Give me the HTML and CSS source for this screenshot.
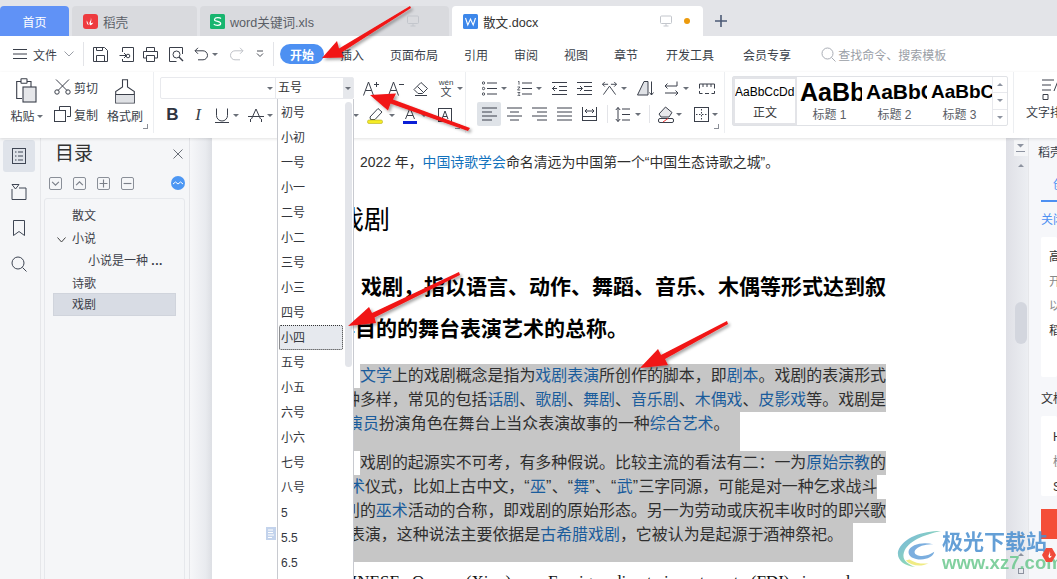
FILE: index.html
```html
<!DOCTYPE html>
<html lang="zh-CN">
<head>
<meta charset="utf-8">
<title>散文.docx</title>
<link rel="stylesheet" href="styles.css">
</head>
<body>
<div class="app">
  <header class="tabs">
    <div class="tab tab-home">首页</div>
    <div class="tab tab-daoke">
      <svg class="tab-ico" viewBox="0 0 15 15"><rect width="15" height="15" rx="3" fill="#ee3b3f"/><path d="M7.600 3.200c1 2.200-.3 3.500-1 5-.4 1-.2 2.200.6 3 1.500-.2 2.700-1.300 3-3-.9.7-1.600 1-2.300.8.3-1.900 1-3.800-.3-5.800zM3.800 6.500c-.5 2 .2 4 2 4.600-.8-1.500-1-3-2-4.600z" fill="#fff"/></svg>
      <span>稻壳</span>
    </div>
    <div class="tab tab-xls">
      <svg class="tab-ico" viewBox="0 0 15 15"><rect width="15" height="15" rx="1.500" fill="#18b56f"/><path d="M11 4.500C10 3.500 5 3 4.500 5.300 4 8 11 6.800 10.700 9.600 10.400 12 5 11.500 3.800 10.200" fill="none" stroke="#fff" stroke-width="1.200"/></svg>
      <span>word关键词.xls</span>
      <svg class="tab-mon" viewBox="0 0 12 12"><rect x=".5" y="1" width="11" height="7.500" rx="1" fill="none" stroke="#c3c6cc"/><path d="M6 8.500v2.500M3.500 11h5" stroke="#c3c6cc"/></svg>
    </div>
    <div class="tab tab-doc">
      <svg class="tab-ico" viewBox="0 0 15 15"><rect width="15" height="15" rx="1.500" fill="#3d87ea"/><path d="M2.500 4l2.300 7 2.700-6 2.700 6 2.300-7" fill="none" stroke="#fff" stroke-width="1.100"/></svg>
      <span>散文.docx</span>
      <svg class="tab-mon" viewBox="0 0 12 12"><rect x=".5" y="1" width="11" height="7.500" rx="1" fill="none" stroke="#c3c6cc"/><path d="M6 8.500v2.500M3.500 11h5" stroke="#c3c6cc"/></svg>
      <i class="dot"></i>
    </div>
    <svg class="plus" viewBox="0 0 12 12"><path d="M6 0v12M0 6h12" stroke="#4c5a75" stroke-width="1.600"/></svg>
  </header>

  <nav class="menu">
    <svg class="m-ham" viewBox="0 0 14 10"><path d="M0 .5h14M0 5h14M0 9.500h14" stroke="#3a3f4a"/></svg>
    <span class="m-file">文件</span>
    <svg class="m-chev" viewBox="0 0 10 6"><path d="M.5.500L5 5 9.500.500" fill="none" stroke="#9a9ea6"/></svg>
    <i class="m-sep m-sep1"></i>
    <svg class="qa qa1" viewBox="0 0 15 15"><path d="M.5.500h11l3 3v11H.500zM3.500 14.500v-6h8v6M3.500.500v3h6v-3" fill="none" stroke="#3a3f4a"/></svg>
    <svg class="qa qa2" viewBox="0 0 15 15"><path d="M3.500 5V.500h11v14h-11V12M.5 8.500h7M5 6l2.500 2.500L5 11" fill="none" stroke="#3a3f4a"/><circle cx="9" cy="9" r="1.800" fill="none" stroke="#3a3f4a"/></svg>
    <svg class="qa qa3" viewBox="0 0 15 15"><path d="M3.500 4.500v-4h8v4M3.500 11H.5V4.500h14V11h-3M3.500 8.500h8v6h-8z" fill="none" stroke="#3a3f4a"/></svg>
    <svg class="qa qa2" viewBox="0 0 15 15"><path d="M13.500 7V.500h-13v14h7" fill="none" stroke="#3a3f4a"/><circle cx="7.500" cy="7.500" r="3.500" fill="none" stroke="#3a3f4a"/><path d="M10 10l4 4" stroke="#3a3f4a" stroke-width="1.400"/></svg>
    <svg class="qa qa-undo" viewBox="0 0 15 15"><path d="M4 .8L1 3.800l3 3M1 3.800h8a4.500 4.500 0 010 9H4" fill="none" stroke="#3a3f4a"/></svg>
    <i class="caret caret-u"></i>
    <svg class="qa qa-redo" viewBox="0 0 15 15"><path d="M11 .8l3 3-3 3M14 3.800H6a4.500 4.500 0 000 9h5" fill="none" stroke="#bfc2c8"/></svg>
    <svg class="m-more" viewBox="0 0 8 8"><path d="M1 1h6M1 3.500l3 3 3-3" fill="none" stroke="#4a4e57"/></svg>
    <i class="m-sep m-sep2"></i>
    <span class="m-start">开始</span>
    <span class="m-item m-ins">插入</span>
    <span class="m-item">页面布局</span>
    <span class="m-item">引用</span>
    <span class="m-item">审阅</span>
    <span class="m-item">视图</span>
    <span class="m-item">章节</span>
    <span class="m-item m-kf">开发工具</span>
    <span class="m-item m-vip">会员专享</span>
    <svg class="m-search" viewBox="0 0 15 15"><circle cx="6.500" cy="6.500" r="5.500" fill="none" stroke="#a9adb5"/><path d="M10.500 10.500l4 4" stroke="#a9adb5"/></svg>
    <span class="m-ph">查找命令、搜索模板</span>
  </nav>

  <section class="toolbar">
    <div class="grp grp-clip">
      <div class="paste">
        <svg class="i-paste" viewBox="0 0 21 25"><path d="M5 3.500H.7v17H6M15 9V3.500h-4" fill="none" stroke="#3a3f4a" stroke-width="1.100"/><rect x="5" y=".7" width="6" height="4.500" rx=".5" fill="#fff" stroke="#3a3f4a" stroke-width="1.100"/><rect x="7" y="9" width="13" height="15" fill="#e6e7ea" stroke="#3a3f4a" stroke-width="1.100"/></svg>
        <span class="lbl">粘贴<i class="caret caret-l"></i></span>
      </div>
      <div class="cutcopy">
        <div class="cc"><svg viewBox="0 0 17 16"><path d="M2 .5l11 11M15 .5L4 11.500" stroke="#3a3f4a" fill="none"/><circle cx="3" cy="13" r="2.200" fill="none" stroke="#3a3f4a"/><circle cx="14" cy="13" r="2.200" fill="none" stroke="#3a3f4a"/></svg><span>剪切</span></div>
        <div class="cc"><svg viewBox="0 0 17 16"><path d="M5.500 4V.5h11v10H13" fill="none" stroke="#3a3f4a"/><rect x=".5" y="4.500" width="11" height="11" fill="#fff" stroke="#3a3f4a"/></svg><span>复制</span></div>
      </div>
      <div class="brush">
        <svg viewBox="0 0 20 25"><path d="M7.500.7h5V8l6.800 4.500V24H.7V12.500L7.500 8z" fill="#fff" stroke="#3a3f4a" stroke-width="1.100"/><rect x="1" y="15.500" width="18" height="8" fill="#dfe1e5"/><path d="M.7 15.500h18.600" stroke="#3a3f4a"/></svg>
        <span class="lbl">格式刷</span>
      </div>
      <i class="corner"></i>
    </div>

    <div class="grp grp-font">
      <div class="row row-f1">
        <div class="fontbox"><span class="f-name"><i class="caret"></i></span><span class="f-size">五号</span><span class="f-drop"><i class="caret"></i></span></div>
        <svg class="i-a i-grow" viewBox="0 0 16 15"><path d="M.5 14.500L5.500 1l5 13.500M2.500 9.500h6M11 3.500h5M13.500 1v5" fill="none" stroke="#3a3f4a"/></svg>
        <svg class="i-a i-shrink" viewBox="0 0 16 15"><path d="M.5 14.500L5.500 1l5 13.500M2.500 9.500h6M11 3.500h5" fill="none" stroke="#3a3f4a"/></svg>
        <svg class="i-a i-erase" viewBox="0 0 16 15"><path d="M1 8.500L8 1.500l6.500 6-5 5H5zM4.500 5.500l6 6M2 14.500h12" fill="none" stroke="#3a3f4a"/></svg>
        <span class="wen"><b>wén</b><em>文</em></span><i class="caret"></i>
      </div>
      <div class="row row-f2">
        <b class="t-b">B</b>
        <i class="t-i">I</i>
        <svg class="t-u" viewBox="0 0 14 15"><path d="M1.500.5v7a5.500 5.500 0 0011 0v-7M0 14.500h14" fill="none" stroke="#3a3f4a"/></svg>
        <i class="caret"></i>
        <svg class="t-s" viewBox="0 0 16 15"><path d="M2.500 14V11M13.500 14v-3M3.500 11L8 1l4.500 10M0 8.500h16" fill="none" stroke="#3a3f4a"/></svg>
        <i class="caret"></i>
        <i class="caret caret-after"></i>
        <svg class="i-hl" viewBox="0 0 17 17"><path d="M3 10L11 1.500l4 3.500-7 7.500H3.500z" fill="none" stroke="#3a3f4a"/><rect x=".5" y="13" width="15" height="3.500" rx="1.500" fill="#f5ec25" stroke="#b7ae1d" stroke-width=".6"/></svg>
        <i class="caret"></i>
        <svg class="i-col" viewBox="0 0 14 17"><path d="M2.500 12L7 1l4.500 11M4 8.500h6" fill="none" stroke="#3a3f4a"/><rect y="14" width="14" height="3" fill="#0b1fd6"/></svg>
        <i class="caret"></i>
        <svg class="i-box" viewBox="0 0 14 14"><rect x=".5" y=".5" width="13" height="13" fill="none" stroke="#3a3f4a"/><path d="M4 11L7 3l3 8M5 8.500h4" fill="none" stroke="#3a3f4a"/></svg>
      </div>
      <i class="corner"></i>
    </div>

    <div class="grp grp-para">
      <div class="row row-p1">
        <svg class="pi" viewBox="0 0 15 15"><path d="M5 2h10M5 7.500h10M5 13h10" stroke="#3a3f4a"/><g fill="none" stroke="#3a3f4a" stroke-width=".9"><circle cx="1.500" cy="2" r="1.200"/><circle cx="1.500" cy="7.500" r="1.200"/><circle cx="1.500" cy="13" r="1.200"/></g></svg><i class="caret"></i>
        <svg class="pi" viewBox="0 0 15 15"><path d="M5 2h10M5 7.500h10M5 13h10" stroke="#3a3f4a"/><path d="M1 .5l1-.3v3.500M.5 6h2.500L.5 9h2.700M.5 11.500h2.500L1.500 13 3 14.700H.5" fill="none" stroke="#3a3f4a" stroke-width=".8"/></svg><i class="caret"></i>
        <svg class="pi" viewBox="0 0 15 15"><path d="M0 1.500h15M7 5.500h8M7 9.500h8M0 13.500h15M0 7.500h5M3 5L.5 7.500 3 10" fill="none" stroke="#3a3f4a"/></svg>
        <svg class="pi" viewBox="0 0 15 15"><path d="M0 1.500h15M7 5.500h8M7 9.500h8M0 13.500h15M0 7.500h5M3 5l2.500 2.500L3 10" fill="none" stroke="#3a3f4a"/></svg>
        <svg class="pi" viewBox="0 0 16 15"><path d="M.5 3h6M3 .5L.5 3 3 5.500M15.500 3h-6M13 .5L15.500 3 13 5.500M1.500 14L8 5l6.500 9" fill="none" stroke="#3a3f4a"/></svg><i class="caret"></i>
        <svg class="pi pi-w17" viewBox="0 0 17 15"><path d="M.5 14L7 .5h4v13.500z" fill="#e0e2e6" stroke="#3a3f4a"/><path d="M14.500.5V14M12.500 11.500l2 2.500 2-2.500" fill="none" stroke="#3a3f4a"/></svg>
        <svg class="pi" viewBox="0 0 15 15"><path d="M13 .5V5H1M3.500 2.500L1 5l2.500 2.500M1 12h13M11.500 9.500L14 12l-2.500 2.500" fill="none" stroke="#3a3f4a"/></svg><i class="caret"></i>
        <svg class="pi pi-w16" viewBox="0 0 16 12"><path d="M.5 6.500V2h15v4.500M4 2v3M8 2v3M12 2v3M.5 9v2.500h3M15.500 9v2.500h-3M6 11.500h4" fill="none" stroke="#3a3f4a"/></svg>
      </div>
      <div class="row row-p2">
        <span class="cell cell-on"><svg viewBox="0 0 15 14"><path d="M0 1h15M0 5h10M0 9h15M0 13h10" stroke="#3a3f4a"/></svg></span>
        <span class="cell"><svg viewBox="0 0 15 14"><path d="M0 1h15M3 5h9M0 9h15M3 13h9" stroke="#3a3f4a"/></svg></span>
        <span class="cell"><svg viewBox="0 0 15 14"><path d="M0 1h15M5 5h10M0 9h15M5 13h10" stroke="#3a3f4a"/></svg></span>
        <span class="cell"><svg viewBox="0 0 15 14"><path d="M0 1h15M0 5h15M0 9h15M0 13h15" stroke="#3a3f4a"/></svg></span>
        <span class="cell"><svg viewBox="0 0 15 14"><path d="M.5 0v14M14.500 0v14M.5 13.500h14M.5 9.500h14M3 4h9M5 2L3 4l2 2M10 2l2 2-2 2" fill="none" stroke="#3a3f4a"/></svg></span>
        <i class="vsep vsep1"></i>
        <svg class="pi pi-ls" viewBox="0 0 15 15"><path d="M3 .5v14M.8 3L3 .5 5.200 3M.8 12L3 14.500 5.200 12M7 2h8M7 7.500h8M7 13h8" fill="none" stroke="#3a3f4a"/></svg><i class="caret"></i>
        <i class="vsep vsep2"></i>
        <svg class="pi pi-shade" viewBox="0 0 16 17"><path d="M1 8L7.500 1 14 6.500 11 11H3z" fill="#e8e9ec" stroke="#3a3f4a"/><rect x=".5" y="12.500" width="15" height="4" rx="1.500" fill="#fff" stroke="#3a3f4a"/><path d="M5 16l5-3.500" stroke="#e33"/></svg><i class="caret"></i>
        <svg class="pi pi-grid" viewBox="0 0 15 15"><rect x=".5" y=".5" width="14" height="14" fill="none" stroke="#3a3f4a"/><path d="M7.500 2v11M2 7.500h11" stroke="#3a3f4a" stroke-dasharray="1.500 1.500"/></svg><i class="caret"></i>
      </div>
      <i class="corner"></i>
    </div>

    <div class="styles">
      <div class="st st-on"><span class="s-prev s0">AaBbCcDd</span><span class="s-lbl">正文</span></div>
      <div class="st"><span class="s-prev s1">AaBbCc</span><span class="s-lbl">标题 1</span></div>
      <div class="st"><span class="s-prev s2">AaBbCc</span><span class="s-lbl">标题 2</span></div>
      <div class="st"><span class="s-prev s3">AaBbCcD</span><span class="s-lbl">标题 3</span></div>
      <div class="st-scroll"><span><i class="caret caret-up caret-g"></i></span><span><i class="caret caret-g"></i></span><span class="st-more"><i class="caret caret-g"></i></span></div>
    </div>

    <div class="grp-wrap">
      <svg class="i-wrap" viewBox="0 0 24 24"><path d="M0 1h12M0 6h9M0 11h9M1 15.500h5v5H1z" fill="none" stroke="#3a3f4a"/><path d="M12 12L16 2l4 10" fill="none" stroke="#3a3f4a"/></svg>
      <span class="lbl lbl-wrap">文字排版</span>
    </div>
  </section>

  <main class="main">
    <aside class="rail">
      <span class="rail-btn rail-on"><svg viewBox="0 0 14 16"><rect x=".5" y=".5" width="13" height="15" fill="none" stroke="#3f4654"/><path d="M3 4h1.500M6 4h5M3 8h1.500M6 8h5M3 12h1.500M6 12h5" stroke="#3f4654"/></svg></span>
      <span class="rail-btn"><svg viewBox="0 0 16 16"><path d="M1 .5h7L4.500 5z M1 5v10.500h14V4H8" fill="none" stroke="#3f4654"/></svg></span>
      <span class="rail-btn"><svg viewBox="0 0 12 16"><path d="M.5.500h11v15L6 11.500.5 15.500z" fill="none" stroke="#3f4654"/></svg></span>
      <span class="rail-btn"><svg viewBox="0 0 16 16"><circle cx="7" cy="7" r="6" fill="none" stroke="#3f4654"/><path d="M11.500 11.500l4 4" stroke="#3f4654"/></svg></span>
    </aside>
    <aside class="toc">
      <div class="toc-head"><h2>目录</h2><svg viewBox="0 0 10 10"><path d="M.5.500l9 9M9.500.500l-9 9" stroke="#6a6f78"/></svg></div>
      <div class="toc-tools">
        <span class="tt"><svg viewBox="0 0 8 8"><path d="M1 2.500l3 3 3-3" fill="none" stroke="#7a7f88"/></svg></span>
        <span class="tt"><svg viewBox="0 0 8 8"><path d="M1 5.500l3-3 3 3" fill="none" stroke="#7a7f88"/></svg></span>
        <span class="tt"><svg viewBox="0 0 8 8"><path d="M4 .5v7M.5 4h7" stroke="#7a7f88"/></svg></span>
        <span class="tt"><svg viewBox="0 0 8 8"><path d="M.5 4h7" stroke="#7a7f88"/></svg></span>
        <span class="tt-blue"><svg viewBox="0 0 14 14"><circle cx="7" cy="7" r="7" fill="#4d97f3"/><path d="M2 8l2.500-2 2.500 2 2.500-2 2.500 2" fill="none" stroke="#fff"/></svg></span>
      </div>
      <div class="toc-tree">
        <div class="node n1">散文</div>
        <div class="node n1"><svg class="chev" viewBox="0 0 9 6"><path d="M.5.500L4.500 5 8.500.500" fill="none" stroke="#444"/></svg>小说</div>
        <div class="node n2">小说是一种 <b>...</b></div>
        <div class="node n1">诗歌</div>
        <div class="node n1 node-on">戏剧</div>
      </div>
    </aside>
    <div class="gutter"></div>
    <article class="page">
      <p class="intro">2022 年，<a>中国诗歌学会</a>命名清远为中国第一个“中国生态诗歌之城”。</p>
      <h1>戏剧</h1>
      <p class="lead first">戏剧，指以语言、动作、舞蹈、音乐、木偶等形式达到叙</p>
      <p class="lead">事目的的舞台表演艺术的总称。</p>
      <div class="sel">
        <span class="ln first"><a>文学</a>上的戏剧概念是指为<a>戏剧表演</a>所创作的脚本，即<a>剧本</a>。戏剧的表演形式</span>
        <span class="ln">多种多样，常见的包括<a>话剧</a>、<a>歌剧</a>、<a>舞剧</a>、<a>音乐剧</a>、<a>木偶戏</a>、<a>皮影戏</a>等。戏剧是</span>
        <span class="ln end shift3">由<a>演员</a>扮演角色在舞台上当众表演故事的一种<a>综合艺术</a>。</span>
        <span class="ln first">戏剧的起源实不可考，有多种假说。比较主流的看法有二：一为<a>原始宗教</a>的</span>
        <span class="ln shift5">巫<a>术</a>仪式，比如上古中文，<q>“</q><a>巫</a><q>”</q>、<q>“</q><a>舞</a><q>”</q>、<q>“</q><a>武</a><q>”</q>三字同源，可能是对一种乞求战斗</span>
        <span class="ln">胜利的<a>巫术</a>活动的合称，即戏剧的原始形态。另一为劳动或庆祝丰收时的即兴歌</span>
        <span class="ln end shift4">舞表演，这种说法主要依据是<a>古希腊戏剧</a>，它被认为是起源于酒神祭祀。</span>
      </div>
      <p class="latin">CHINESE Opera (Xiqu)&nbsp;&nbsp;&nbsp;Foreign direct investment (FDI) is and</p>
      <svg class="comment" viewBox="0 0 10 13"><rect width="10" height="13" fill="#c3d3ec"/><path d="M2 3h5M2 5.500h5M2 8h6M2 10.500h4" stroke="#fff"/></svg>
    </article>
    <div class="vscroll">
      <span class="vs-top"><svg viewBox="0 0 9 8"><path d="M1 0h7L4.500 3.500z" fill="#8d93a0"/><path d="M0 7.500h9" stroke="#8d93a0"/></svg></span>
      <i class="caret caret-up caret-g"></i>
      <span class="vs-thumb"></span>
      <i class="caret caret-g vs-d"></i>
      <i class="caret caret-up caret-g"></i>
      <svg class="vs-sq" viewBox="0 0 6 6"><rect x=".5" y=".5" width="5" height="5" fill="none" stroke="#8d93a0"/></svg>
    </div>
    <aside class="side">
      <div class="s-title">稻壳</div>
      <div class="s-tab"><span>创作</span></div>
      <div class="s-link">关闭</div>
      <div class="s-card s-card1"><p class="dk">高级</p><p class="gr">开通</p><p class="gr">以上</p><p class="dk">稻壳</p></div>
      <div class="s-sub">文档</div>
      <div class="s-card s-card2"><p class="dk">H5</p><p class="gr">模板</p><p class="dk">S</p></div>
      <div class="s-red"></div>
    </aside>
  </main>

  <div class="fsize-list">
    <div class="fs-items">
      <span>初号</span><span>小初</span><span>一号</span><span>小一</span><span>二号</span><span>小二</span><span>三号</span><span>小三</span><span>四号</span><span class="fs-on">小四</span><span>五号</span><span>小五</span><span>六号</span><span>小六</span><span>七号</span><span>八号</span><span>5</span><span>5.5</span><span>6.5</span>
    </div>
    <i class="fs-thumb"></i>
  </div>

  <div class="watermark">
    <svg class="wm-logo" viewBox="0 0 48 40">
      <defs><linearGradient id="wg" x1="0" y1="0" x2="1" y2="1"><stop offset="0" stop-color="#3f92dc"/><stop offset=".55" stop-color="#5fc6a0"/><stop offset="1" stop-color="#e8e24a"/></linearGradient></defs>
      <path d="M46 1C26 1 6 8 1 22c-2 9 6 16 18 17-9-3-14-8-12-15C10 12 28 5 46 1z" fill="url(#wg)" opacity=".85"/>
      <path d="M38 15c-11-3-24 0-26 7-1 6 6 9 13 9 7 0 13-3 14-8-4 3-10 5-16 4-5-1-6-4-3-7 4-4 12-5 18-5z" fill="#3d88cf" opacity=".8"/>
      <path d="M9 32c6 6 16 7 24 3-6 1-14 0-20-4z" fill="#e8e24a" opacity=".8"/>
    </svg>
    <div class="wm-text"><b>极光下载站</b><span>www.xz7.com</span></div>
  </div>
  <svg class="s-hex" viewBox="0 0 14 14"><path d="M4 0h6l4 7-4 7H4L0 7z" fill="#f04a3a"/><path d="M7.500 3c.8 2-.6 3-1 4.500-.2 1 .3 2 1 2.500 1.200-.3 2-1.200 2.200-2.500-.7.5-1.200.7-1.700.5.2-1.500.5-3.200-.5-5z" fill="#fff"/></svg>

  <svg class="arrows" viewBox="0 0 1057 579">
    <defs><filter id="sh" x="-20%" y="-20%" width="140%" height="140%"><feDropShadow dx="2" dy="2" stdDeviation="1.500" flood-color="#000" flood-opacity=".35"/></filter></defs>
    <g fill="#f11414" filter="url(#sh)">
      <path d="M410 6L339 48.500 337 41 322 58 344 57.500 341.500 52.500 411 8z"/>
      <path d="M470 128L393 99.500 396 93.500 370 95 388 110.500 390.500 103.500 468 131z"/>
      <path d="M459 272L372 313 369 307 348 326 376 323 374.500 317.500 460 275z"/>
      <path d="M727 321L661 355 658 349 640 368 668 365 665 359 728 324z"/>
    </g>
  </svg>
</div>
</body>
</html>
```
FILE: styles.css
```css
* { box-sizing: border-box; }
html, body { margin: 0; padding: 0; background: #fff; }
body { font-family: "Liberation Sans", "Noto Sans CJK SC", sans-serif; font-size: 12px; color: #3a3f4a; }
svg { display: block; flex: none; }
i { font-style: normal; }
p, h1, h2 { margin: 0; }

.app { position: relative; width: 1057px; height: 579px; overflow: hidden; }

/* tabs */
.tabs { display: flex; align-items: flex-end; height: 36px; background: #e3e4e8; gap: 3px; }
.tab { display: flex; flex: none; align-items: center; height: 30px; border-radius: 4px 4px 0 0; background: #d9dade; font-size: 12.600px; color: #5a5e66; white-space: nowrap; }
.tab-home { width: 69px; justify-content: center; background: #6092f6; color: #fff; font-size: 12px; }
.tab-daoke { width: 125px; padding-left: 11px; }
.tab-xls { width: 249px; padding: 0 30px 0 10px; }
.tab-doc { width: 251px; padding: 0 13px 0 11px; background: #fff; color: #333; }
.tab-ico { width: 15px; height: 15px; margin-right: 5px; }
.tab-mon { width: 12px; height: 12px; margin-left: auto; }
.dot { flex: none; width: 6px; height: 6px; border-radius: 50%; background: #ec9a0c; margin-left: 12px; }
.plus { width: 12px; height: 12px; margin: 0 0 9px 9px; }

/* menu */
.menu { display: flex; align-items: center; height: 36px; background: #fff; padding-left: 13px; font-size: 12px; color: #3a3f4a; }
.menu > * { flex: none; }
.m-ham { width: 14px; height: 10px; }
.m-file { margin-left: 6px; width: 24px; }
.m-chev { width: 10px; height: 6px; margin-left: 7px; }
.m-sep { width: 1px; height: 24px; background: #e3e4e8; }
.m-sep1 { margin-left: 9px; }
.qa { width: 15px; height: 15px; }
.qa1 { margin-left: 9px; }
.qa2 { margin-left: 11px; }
.qa3 { margin-left: 9px; }
.qa-undo { margin-left: 10px; }
.caret-u { margin-left: 3px; }
.qa-redo { margin-left: 11px; }
.m-more { width: 8px; height: 8px; margin-left: 12px; }
.m-sep2 { margin-left: 9px; }
.m-start { display: flex; align-items: center; justify-content: center; width: 44px; height: 20px; margin-left: 6px; border-radius: 10px; background: #4d90f2; color: #fff; font-weight: 700; }
.m-item { margin-left: 26px; white-space: nowrap; }
.m-ins { margin-left: 16px; }
.m-kf { margin-left: 28px; }
.m-vip { margin-left: 29px; }
.m-search { width: 15px; height: 15px; margin-left: 30px; }
.m-ph { margin-left: 2px; color: #9a9ea6; white-space: nowrap; }

/* shared small pieces */
.caret { display: inline-block; flex: none; width: 0; height: 0; border-left: 3px solid transparent; border-right: 3px solid transparent; border-top: 3px solid #6b7079; }
.caret-up { border-top: 0; border-bottom: 3px solid #6b7079; }
.caret-g { border-top-color: #8d93a0; border-bottom-color: #8d93a0; }
.corner { position: absolute; right: 5px; bottom: 4px; width: 5px; height: 5px; border-right: 1px solid #8a8e96; border-bottom: 1px solid #8a8e96; }
.lbl { display: block; white-space: nowrap; font-size: 12px; line-height: 16px; }
.row { display: flex; align-items: center; }

/* toolbar */
.toolbar { position: relative; z-index: 2; display: flex; height: 66px; background: #fff; box-shadow: 0 1px 3px rgba(0, 0, 0, .12); }
.toolbar > * { flex: none; }
.grp { position: relative; height: 61px; border-right: 1px solid #eceef1; }
.grp-clip { display: flex; width: 154px; }
.paste { width: 53px; display: flex; flex-direction: column; align-items: center; padding-top: 6px; }
.i-paste { width: 21px; height: 25px; margin-bottom: 6px; }
.caret-l { margin-left: 2px; vertical-align: 3px; }
.cutcopy { width: 53px; display: flex; flex-direction: column; gap: 11px; padding: 7px 0 0 1px; }
.cc { display: flex; align-items: center; height: 16px; }
.cc svg { width: 17px; height: 16px; margin-right: 3px; }
.brush { width: 38px; display: flex; flex-direction: column; align-items: center; padding-top: 7px; }
.brush svg { width: 20px; height: 25px; margin-bottom: 5px; }

.grp-font { width: 312px; padding: 5px 0 0 6px; }
.fontbox { display: flex; flex: none; width: 194px; height: 22px; border: 1px solid #e8e9ed; border-radius: 2px; }
.f-name { width: 115px; display: flex; align-items: center; justify-content: flex-end; border-right: 1px solid #e8e9ed; }
.f-name .caret { margin-right: 2px; }
.f-size { width: 67px; padding-left: 2px; font-size: 12px; line-height: 20px; color: #333; }
.f-drop { flex: 1; display: flex; align-items: center; justify-content: center; background: #e6e8ec; }
.i-a { width: 16px; height: 15px; }
.i-grow { margin-left: 9px; }
.i-shrink { margin-left: 9px; }
.i-erase { margin-left: 9px; }
.wen { display: flex; flex-direction: column; align-items: center; width: 16px; margin-left: 9px; line-height: 1; }
.wen b { font-size: 8px; font-weight: 400; line-height: 8px; }
.wen em { font-style: normal; font-size: 11px; line-height: 11px; }
.wen + .caret { margin-left: 3px; }
.row-f2 { margin-top: 4px; height: 24px; }
.t-b { flex: none; width: 14px; margin-left: 5.500px; font-size: 17px; font-weight: 700; text-align: center; color: #2f3440; }
.t-i { flex: none; width: 12px; margin-left: 12.500px; font-family: "Liberation Serif", serif; font-size: 17px; font-style: italic; text-align: center; }
.t-u { width: 14px; height: 15px; margin-left: 11px; }
.t-u + .caret { margin-left: 4px; }
.t-s { width: 16px; height: 15px; margin-left: 9px; }
.t-s + .caret { margin-left: 3px; }
.row-f2 .caret-after { margin-left: 80px; }
.i-hl { width: 17px; height: 17px; margin-left: 8px; }
.i-hl + .caret { margin-left: 5px; }
.i-col { width: 14px; height: 17px; margin-left: 8px; }
.i-col + .caret { margin-left: 4px; }
.i-box { width: 14px; height: 14px; margin-left: 11px; }

.grp-para { width: 259px; padding: 5px 0 0 11px; }
.row-p1 { gap: 10px; height: 22px; padding-left: 5px; }
.row-p1 .caret { margin-left: -6px; }
.pi { width: 15px; height: 15px; }
.pi-w17 { width: 17px; }
.pi-w16 { width: 16px; height: 12px; }
.row-p2 { margin-top: 3px; height: 24px; }
.cell { display: flex; flex: none; align-items: center; justify-content: center; width: 24px; height: 24px; margin-right: 1px; border-radius: 2px; }
.cell svg { width: 15px; height: 14px; }
.cell-on { background: #dfe3e8; }
.vsep { flex: none; width: 1px; height: 18px; background: #e3e4e8; }
.vsep1 { margin: 0 7px 0 5px; }
.pi-ls + .caret { margin-left: 5px; }
.vsep2 { margin: 0 8px; }
.pi-shade { width: 16px; height: 17px; }
.pi-shade + .caret { margin-left: 2px; }
.pi-grid { margin-left: 12px; }
.pi-grid + .caret { margin-left: 3px; }

.styles { display: flex; width: 276px; height: 50px; margin: 4px 0 0 7px; border: 1px solid #e0e2e6; border-radius: 2px; }
.st { flex: none; width: 65px; height: 48px; display: flex; flex-direction: column; align-items: center; overflow: hidden; }
.st-on { width: 64px; border: 2px solid #e3e4e8; }
.s-prev { display: block; height: 30px; width: 100%; overflow: hidden; white-space: nowrap; line-height: 30px; color: #000; text-align: left; }
.st-on .s-prev { line-height: 26px; height: 26px; }
.s0 { font-size: 12px; padding-left: 0; }
.s1 { font-size: 25px; font-weight: 700; padding-left: 3px; }
.s2 { font-size: 21px; font-weight: 700; padding-left: 4px; }
.s3 { font-size: 19px; font-weight: 700; padding-left: 4px; }
.s-lbl { font-size: 12px; line-height: 16px; color: #5a5e66; }
.st-on .s-lbl { color: #333; }
.st-scroll { flex: 1; display: flex; flex-direction: column; border-left: 1px solid #e8e9ed; }
.st-scroll span { flex: 1; display: flex; align-items: center; justify-content: center; border-bottom: 1px solid #e8e9ed; }
.st-scroll span:last-child { border-bottom: 0; }
.grp-wrap { margin-left: 5px; padding-left: 12px; border-left: 1px solid #eceef1; height: 61px; white-space: nowrap; }
.i-wrap { width: 24px; height: 24px; margin: 7px 0 2px 16px; }

/* main */
.main { display: flex; height: 441px; }
.main > * { flex: none; }
.rail { width: 41px; padding: 2px 3px 0; background: #f5f6f8; border-right: 1px solid #e6e7ea; display: flex; flex-direction: column; gap: 4px; }
.rail-btn { display: flex; align-items: center; justify-content: center; width: 32px; height: 32px; border-radius: 3px; }
.rail-btn svg { width: 16px; height: 16px; }
.rail-on { background: #dfe3ea; }
.toc { width: 149px; padding: 0 4px 0 3px; background: #f5f6f8; border-right: 1px solid #e3e4e8; }
.toc-head { display: flex; align-items: center; justify-content: space-between; height: 30px; padding: 2px 2px 0 11px; }
.toc-head h2 { font-size: 19px; font-weight: 400; line-height: 28px; color: #333; }
.toc-head svg { width: 10px; height: 10px; }
.toc-tools { display: flex; align-items: center; height: 30px; padding-left: 5px; gap: 11px; }
.tt { display: flex; align-items: center; justify-content: center; width: 13px; height: 13px; border: 1px solid #8a8f98; border-radius: 2px; }
.tt svg { width: 9px; height: 9px; }
.tt-blue { margin-left: 26px; }
.tt-blue svg { width: 14px; height: 14px; }
.toc-tree { height: 400px; padding: 6px 8px 0 8px; background: #f5f6f8; border: 1px solid #e6e8ec; border-radius: 3px; }
.node { position: relative; height: 22.500px; line-height: 22px; color: #3d414a; font-size: 12px; }
.n1 { padding-left: 19px; }
.n2 { padding-left: 35px; }
.n2 b { letter-spacing: .5px; }
.chev { position: absolute; left: 4px; top: 9px; width: 9px; height: 6px; }
.node-on { margin-top: -2px; background: #d8dce4; border: 1px solid #d0d4dc; padding-left: 18px; }
.gutter { width: 22px; background: linear-gradient(90deg, #f6f7f9, #e9ebef 70%, #dddfe4); }

.page { position: relative; width: 794px; padding: 14px 0 0 116px; background: #fff; overflow: hidden; color: #2f2f2f; font-size: 15.950px; }
.page a { color: #1a5c9c; }
.page q { quotes: none; letter-spacing: .4px; }
.intro { padding-left: 32px; font-size: 13.900px; line-height: 20px; white-space: nowrap; }
.intro a { color: #1272bd; }
.page h1 { margin: 30px 0 0 10px; font-size: 26px; font-weight: 400; line-height: 36px; color: #000; }
.lead { font-size: 21px; font-weight: 700; line-height: 42px; color: #000; white-space: nowrap; margin-left: 6px; }
.lead.first { margin-top: 28px; padding-left: 27px; }
.sel { display: flex; flex-direction: column; align-items: flex-start; margin-top: 14px; }
.ln { display: block; height: 24px; line-height: 24px; white-space: nowrap; background: #c6c6c6; }
.ln.first { margin-left: 32px; }
.ln.end { height: 39px; padding-right: 10px; }
.shift3 { padding-left: 3px; }
.shift4 { padding-left: 5px; }
.shift5 { padding-left: 5px; }
.latin { margin-top: 8px; font-family: "Liberation Serif", serif; font-size: 17px; line-height: 24px; white-space: nowrap; color: #111; word-spacing: 8px; }
.comment { position: absolute; left: 54px; top: 389px; width: 10px; height: 13px; }

.vscroll { position: relative; width: 23px; display: flex; flex-direction: column; align-items: center; padding-top: 2px; background: linear-gradient(90deg, #dfe0e6, #eceef2); border-right: 1px solid #e6e7ea; }
.vs-top { display: flex; align-items: center; justify-content: center; width: 14px; height: 16px; margin-left: 7px; background: #f4f5f7; }
.vs-top svg { width: 9px; height: 8px; }
.vscroll > .caret { margin: 8px 0 0 7px; }
.vs-thumb { width: 12px; height: 42px; margin: 135px 0 0 8px; border-radius: 6px; background: #d3d6de; }
.vscroll > .vs-d { margin-top: 191px; }
.vscroll > .vs-d + .caret { margin-top: 15px; }
.vs-sq { width: 6px; height: 6px; margin: 12px 0 0 7px; }

.side { flex: 1 0 0; padding-left: 12px; background: #f6f7fa; overflow: hidden; white-space: nowrap; font-size: 12px; }
.s-title { margin-left: -3px; line-height: 30px; }
.s-tab { height: 34px; border-bottom: 2px solid #4d90f2; padding: 9px 0 0 12px; color: #4d90f2; line-height: 16px; }
.s-link { margin-top: 9px; line-height: 18px; color: #4d90f2; }
.s-card { margin-top: 8px; background: #fff; border-radius: 2px; padding-left: 8px; }
.s-card1 { height: 140px; padding-top: 8px; }
.s-card1 p { line-height: 24.500px; }
.dk { color: #333; }
.gr { color: #888; }
.s-sub { margin-top: 13px; line-height: 18px; color: #333; }
.s-card2 { height: 80px; padding: 9px 0 0 12px; }
.s-card2 p { line-height: 25px; }
.s-red { height: 30px; margin-top: 13px; background: #f44e38; }

/* font-size dropdown */
.fsize-list { position: absolute; left: 277px; top: 99px; width: 77px; height: 480px; background: #fff; border-left: 1px solid #c8cad0; border-right: 1px solid #c8cad0; z-index: 3; }
.fs-items { display: flex; flex-direction: column; padding: 1px 0 0 1px; }
.fs-items span { display: block; width: 64px; height: 25px; padding: 1px 0 0 2px; font-size: 12px; line-height: 25px; color: #33363d; }
.fs-items .fs-on { background: #e6e9ee; border: 1px dotted #333; border-radius: 2px; padding: 0 0 0 1px; line-height: 24px; }
.fs-thumb { position: absolute; left: 67px; top: 3px; width: 7px; height: 265px; border-radius: 4px; background: #e3e5ea; }

/* overlays */
.watermark { position: absolute; left: 897px; top: 530px; display: flex; z-index: 4; pointer-events: none; opacity: .85; }
.wm-logo { width: 46px; height: 38px; }
.wm-text { display: flex; flex-direction: column; margin-left: -1px; }
.wm-text b { font-size: 21px; line-height: 23px; color: #4a8fd0; white-space: nowrap; font-weight: 700; }
.wm-text span { font-family: "Liberation Sans", sans-serif; font-weight: 700; font-size: 18.500px; line-height: 19px; color: #6cc88f; white-space: nowrap; }
.s-hex { position: absolute; left: 1042px; top: 548px; width: 14px; height: 14px; z-index: 5; }
.arrows { position: absolute; left: 0; top: 0; width: 1057px; height: 579px; z-index: 6; pointer-events: none; }
```
